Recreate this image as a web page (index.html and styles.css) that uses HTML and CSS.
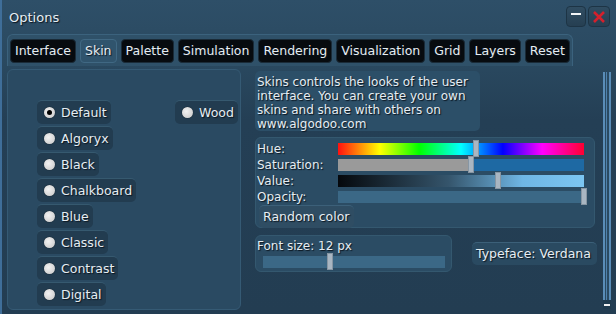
FILE: index.html
```html
<!DOCTYPE html>
<html lang="en">
<head>
  <meta charset="UTF-8" />
  <title>Options</title>
  <link rel="stylesheet" href="styles.css">
</head>
<body>

<div class="window">
  <!-- Title bar -->
  <div class="titlebar">
    <span class="title">Options</span>
    <div class="winbtns">
      <span class="winbtn min"><i></i></span>
      <span class="winbtn close">
        <svg width="14" height="14" viewBox="0 0 14 14"><path d="M2 2 L12 12 M12 2 L2 12" stroke="#d4202c" stroke-width="2.6"/></svg>
      </span>
    </div>
  </div>

  <!-- Tabs -->
  <div class="tabbar">
    <span class="tab">Interface</span>
    <span class="tab active">Skin</span>
    <span class="tab">Palette</span>
    <span class="tab">Simulation</span>
    <span class="tab">Rendering</span>
    <span class="tab">Visualization</span>
    <span class="tab">Grid</span>
    <span class="tab">Layers</span>
    <span class="tab">Reset</span>
  </div>

  <div class="content">
    <!-- Skin list -->
    <div class="skins">
      <div class="col first">
        <span class="radio checked"><i></i>Default</span>
        <span class="radio"><i></i>Algoryx</span>
        <span class="radio"><i></i>Black</span>
        <span class="radio"><i></i>Chalkboard</span>
        <span class="radio"><i></i>Blue</span>
        <span class="radio"><i></i>Classic</span>
        <span class="radio"><i></i>Contrast</span>
        <span class="radio"><i></i>Digital</span>
      </div>
      <div class="col">
        <span class="radio"><i></i>Wood</span>
      </div>
    </div>

    <div class="right">
      <div class="desc">Skins controls the looks of the user<br>interface. You can create your own<br>skins and share with others on<br>www.algodoo.com</div>

      <div class="colors">
        <div class="row">
          <span class="lbl">Hue:</span>
          <div class="track hue"><b class="thumb" style="left: 135px"></b></div>
        </div>
        <div class="row">
          <span class="lbl">Saturation:</span>
          <div class="track sat"><b class="thumb" style="left: 130px"></b></div>
        </div>
        <div class="row">
          <span class="lbl">Value:</span>
          <div class="track val"><b class="thumb" style="left: 157px"></b></div>
        </div>
        <div class="row">
          <span class="lbl">Opacity:</span>
          <div class="track opa"><b class="thumb" style="left: 243px"></b></div>
        </div>
        <span class="btn random">Random color</span>
      </div>

      <div class="fontrow">
        <div class="fontsize">
          <span class="lbl">Font size: 12 px</span>
          <div class="track fs"><b class="thumb" style="left: 64px"></b></div>
        </div>
        <span class="btn typeface">Typeface: Verdana</span>
      </div>
    </div>

    <div class="scrollbar"><span class="knob"><i></i></span></div>
  </div>
</div>

</body>
</html>
```

FILE: styles.css
```css
* {
  box-sizing: border-box;
  margin: 0;
  padding: 0;
}

body {
  font-family: "DejaVu Sans", Verdana, sans-serif;
  font-size: 12px;
  background: #233d52;
  color: #e6edf2;
  overflow: hidden;
}

.window {
  width: 616px;
  height: 314px;
  border-left: 2px solid #3f6e99;
  background: linear-gradient(#2e4f68, #2a4960 60px, #243f55 120px, #233d52);
  text-shadow: 1px 1px 1px #0b1620;
}

.titlebar {
  height: 34px;
  display: flex;
  justify-content: space-between;
  padding: 6px 6px 0 7px;
}

.title {
  font-size: 13px;
  line-height: 24px;
}

.winbtns {
  display: flex;
  gap: 2px;
}

.winbtn {
  width: 20px;
  height: 21px;
  border-radius: 4px;
  background: linear-gradient(#304d62, #263f52);
  border: 1px solid #1d3445;
  display: flex;
  align-items: center;
  justify-content: center;
}

.winbtn.close {
  width: 22px;
}

.winbtn.min i {
  width: 10px;
  height: 2px;
  background: #f2f4f6;
  margin-top: -6px;
}

/* tabs */
.tabbar {
  margin-left: 5px;
  width: 566px;
  height: 32px;
  display: flex;
  gap: 4px;
  padding: 4px 4px 0 2px;
  background: #2f5169;
  border: 1px solid #3b627d;
  border-bottom: none;
  border-radius: 6px 6px 0 0;
}

.tab {
  height: 24px;
  line-height: 22px;
  padding: 0 4px;
  font-size: 12.5px;
  background: #070b0f;
  border: 1px solid #1a2b38;
  border-radius: 4px;
}

.tab.active {
  background: #30546d;
  border-color: #406883;
}

/* body */
.content {
  display: flex;
  height: 248px;
  padding: 3px 0 0 5px;
}

.skins {
  width: 234px;
  height: 241px;
  background: #2a4a62;
  border: 1px solid #355a74;
  border-radius: 6px;
  padding: 30px 0 0 29px;
  display: flex;
}

.col {
  display: flex;
  flex-direction: column;
  gap: 2px;
  align-items: flex-start;
}

.col.first {
  width: 138px;
}

.radio {
  height: 24px;
  display: flex;
  align-items: center;
  gap: 6px;
  padding: 0 4px 0 7px;
  font-size: 12.5px;
  background: #223c50;
  border-top: 1px solid #36596f;
  border-radius: 5px;
}

.radio i {
  width: 11px;
  height: 11px;
  border-radius: 50%;
  background: radial-gradient(circle at 40% 40%, #f2f2f2, #c6c6c6);
  box-shadow: 0 0 1px #000;
  display: flex;
  align-items: center;
  justify-content: center;
}

.radio.checked i::after {
  content: "";
  width: 5px;
  height: 5px;
  border-radius: 50%;
  background: #000;
}

.right {
  width: 342px;
  margin-left: 14px;
  padding-top: 2px;
}

.desc {
  width: 225px;
  height: 60px;
  background: #2c4f68;
  border-radius: 5px;
  padding: 4px 2px 0;
  line-height: 14px;
}

.colors {
  margin-top: 6px;
  width: 340px;
  height: 91px;
  background: #2b4c64;
  border: 1px solid #34586f;
  border-radius: 6px;
  padding: 3px 0 0 1px;
}

.row {
  display: flex;
  align-items: center;
  height: 16px;
}

.lbl {
  width: 81px;
}

.track {
  position: relative;
  width: 246px;
  height: 12px;
}

.thumb {
  position: absolute;
  top: -3px;
  width: 6px;
  height: 17px;
  background: #a9b6c2;
  border: 1px solid #8796a3;
}

.hue {
  background: linear-gradient(to right, #ff1010, #ffff00 17%, #00ff00 33%, #00ffff 50%, #0000ff 67%, #ff00ff 83%, #ff0030);
}

.sat {
  background: linear-gradient(to right, #9a9a9a 53%, #1e69a3 53%);
}

.val {
  background: linear-gradient(to right, #05080c, #35556c 45%, #6fb6e4 75%, #7cc6f2);
}

.opa {
  background: #3b6886;
}

.btn {
  display: inline-block;
  height: 23px;
  line-height: 22px;
  padding: 0 4px;
  font-size: 12.5px;
  background: #2f4d63;
  border-top: 1px solid #3c6079;
  border-radius: 5px;
}

.random {
  margin: 0 0 0 2px;
}

.fontrow {
  display: flex;
  margin-top: 7px;
}

.fontsize {
  width: 197px;
  height: 37px;
  background: #2b4c64;
  border: 1px solid #34586f;
  border-radius: 6px;
  padding: 2px 0 0 1px;
}

.fontsize .lbl {
  display: block;
  width: auto;
  line-height: 16px;
}

.track.fs {
  width: 182px;
  margin: 2px 0 0 6px;
  background: #3b6886;
}

.typeface {
  margin: 7px 0 0 20px;
  width: 125px;
  background: #2a4a61;
}

.scrollbar {
  position: relative;
  margin: 3px 0 0 6px;
  width: 8px;
  height: 237px;
  background: linear-gradient(to right, #5a8db8 2px, #2a4a62 2px, #2a4a62 3px, #4f82ad 3px, #4f82ad 4px, #2a4a62 4px, #2a4a62 6px, #5a8db8 6px);
}

.knob {
  position: absolute;
  bottom: 0;
  left: 0;
  width: 8px;
  height: 9px;
  background: #1f3a4e;
  display: flex;
  align-items: center;
  justify-content: center;
}

.knob i {
  width: 6px;
  height: 2px;
  background: #f0f0f0;
}
```
